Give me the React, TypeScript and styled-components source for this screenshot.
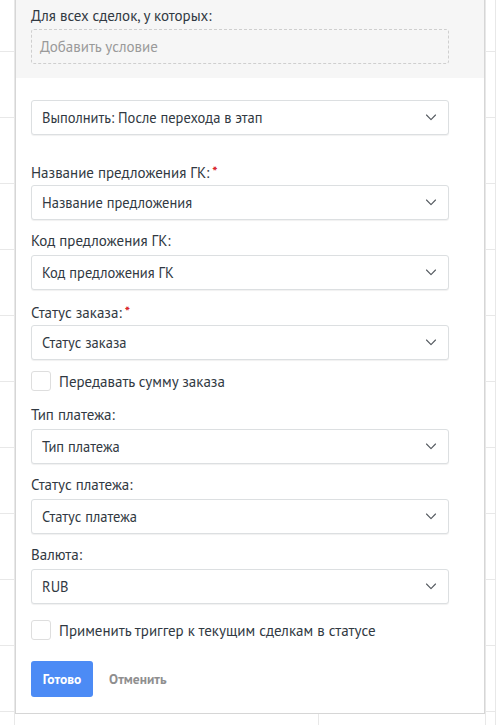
import React from "react";
import styled, { createGlobalStyle } from "styled-components";

const Global = createGlobalStyle`
  html, body { margin: 0; padding: 0; background: #fff; }
  body { font-family: "PT Sans", "Roboto", "Liberation Sans", sans-serif; color: #313942; }
  * { box-sizing: border-box; }
`;

const Page = styled.div`
  position: relative;
  width: 496px;
  height: 725px;
  overflow: hidden;
`;

const Grid = styled.div`
  display: grid;
  grid-template-columns: 15px 304px 167px 1fr;
  grid-template-rows: 52px repeat(11, 66px);
`;

const Cell = styled.div`
  border-right: 1px solid #e8e8e8;
  border-bottom: 1px solid #e8e8e8;
`;

const Panel = styled.div`
  position: absolute;
  left: 15px;
  top: -1px;
  width: 470px;
  background: #fff;
  border: 1px solid #d6d6d6;
  font-size: 15px;
`;

const Header = styled.div`
  background: #f6f6f6;
  padding: 7px 35px 14px 15px;
`;

const Label = styled.div`
  line-height: 18px;
  height: 18px;
  font-size: 15px;
  color: #313942;
  white-space: nowrap;
`;

const Req = styled.span`
  color: #d9252b;
  font-size: 14px;
  font-weight: 700;
  margin-left: 3px;
  vertical-align: 2px;
`;

const Dashed = styled.div`
  margin-top: 4px;
  height: 35px;
  border: 1px dashed #cfcfcf;
  border-radius: 3px;
  display: flex;
  align-items: center;
  padding-left: 8px;
  color: #9a9a9a;
  font-size: 15px;
`;

const Body = styled.div`
  padding: 22px 35px 16px 15px;
  display: flex;
  flex-direction: column;
`;

const Field = styled.div<{ $gap: number }>`
  margin-top: ${(p) => p.$gap}px;
  display: flex;
  flex-direction: column;
  gap: 5px;
`;

const Select = styled.div`
  height: 35px;
  border: 1px solid #dcdfe1;
  border-radius: 3px;
  box-shadow: 0 1px 1px rgba(0, 0, 0, 0.06);
  display: flex;
  align-items: center;
  justify-content: space-between;
  padding: 0 11px 0 10px;
  font-size: 14.5px;
  color: #313942;
  background: #fff;
  white-space: nowrap;
`;

const CheckRow = styled.label<{ $gap: number }>`
  margin-top: ${(p) => p.$gap}px;
  display: flex;
  align-items: center;
  gap: 8px;
  height: 20px;
  font-size: 15px;
  color: #313942;
  white-space: nowrap;
`;

const Box = styled.span`
  width: 20px;
  height: 20px;
  border: 1px solid #dedede;
  border-radius: 3px;
  background: #fff;
  flex: none;
`;

const Actions = styled.div`
  margin-top: 21px;
  display: flex;
  align-items: center;
  gap: 16px;
`;

const Primary = styled.button`
  width: 62px;
  height: 36px;
  border: none;
  border-radius: 3px;
  background: #4c8bf5;
  color: #fff;
  font-family: inherit;
  font-weight: 700;
  font-size: 13.5px;
  padding: 0;
`;

const Cancel = styled.span`
  color: #8f8f8f;
  font-weight: 700;
  font-size: 13.5px;
`;

const Chevron = () => (
  <svg width="12" height="7" viewBox="0 0 12 7" fill="none">
    <path d="M1.5 1l4.5 4.6L10.5 1" stroke="#555a60" strokeWidth="1.1" strokeLinecap="round" strokeLinejoin="round" />
  </svg>
);

const Sel = ({ text }: { text: string }) => (
  <Select>
    <span>{text}</span>
    <Chevron />
  </Select>
);

const fields = [
  { label: "Название предложения ГК:", req: true, value: "Название предложения", gap: 27 },
  { label: "Код предложения ГК:", req: false, value: "Код предложения ГК", gap: 12 },
  { label: "Статус заказа:", req: true, value: "Статус заказа", gap: 12 },
];

const fields2 = [
  { label: "Тип платежа:", value: "Тип платежа", gap: 15 },
  { label: "Статус платежа:", value: "Статус платежа", gap: 12 },
  { label: "Валюта:", value: "RUB", gap: 12 },
];

export default function App() {
  return (
    <>
      <Global />
      <Page>
        <Grid>
          {Array.from({ length: 48 }).map((_, i) => (
            <Cell key={i} />
          ))}
        </Grid>
        <Panel>
          <Header>
            <Label>Для всех сделок, у которых:</Label>
            <Dashed>Добавить условие</Dashed>
          </Header>
          <Body>
            <Sel text="Выполнить: После перехода в этап" />
            {fields.map((f) => (
              <Field key={f.label} $gap={f.gap}>
                <Label>
                  {f.label}
                  {f.req && <Req>*</Req>}
                </Label>
                <Sel text={f.value} />
              </Field>
            ))}
            <CheckRow $gap={11}>
              <Box />
              Передавать сумму заказа
            </CheckRow>
            {fields2.map((f) => (
              <Field key={f.label} $gap={f.gap}>
                <Label>{f.label}</Label>
                <Sel text={f.value} />
              </Field>
            ))}
            <CheckRow $gap={16}>
              <Box />
              Применить триггер к текущим сделкам в статусе
            </CheckRow>
            <Actions>
              <Primary>Готово</Primary>
              <Cancel>Отменить</Cancel>
            </Actions>
          </Body>
        </Panel>
      </Page>
    </>
  );
}
